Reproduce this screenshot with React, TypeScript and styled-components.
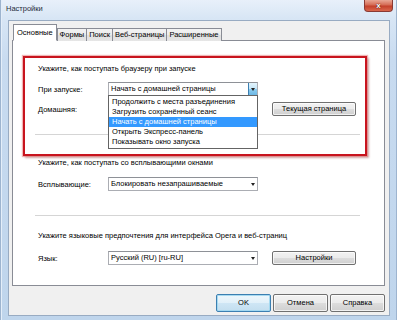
import React from 'react';
import styled, { createGlobalStyle, css } from 'styled-components';

const Global = createGlobalStyle`
  html, body { margin: 0; padding: 0; background: #cfe0f2; }
  body { font-family: "Liberation Sans", Arial, sans-serif; font-size: 7.5px; color: #000; }
  * { box-sizing: border-box; }
`;

const Window = styled.div`
  width: 397px;
  height: 320px;
  display: flex;
  flex-direction: column;
  background: linear-gradient(180deg, #e8f0fa 0px, #d8e6f5 18px, #c8dbf0 60px, #bfd5ec 100%);
  box-shadow: inset 1px 0 0 #9db4cf, inset 2px 0 0 #e4eef9, inset -1px 0 0 #9db4cf;
  overflow: hidden;
`;

const TitleBar = styled.div`
  height: 20px;
  display: flex;
  align-items: flex-start;
  justify-content: space-between;
  padding: 0 4px 0 6px;
`;

const Title = styled.div`
  margin-top: 4px;
  font-size: 7.5px;
  line-height: 10px;
  color: #1e2a3a;
`;

const CloseButton = styled.div`
  width: 29px;
  height: 12px;
  border: 1px solid #8a3a34;
  border-top: none;
  border-radius: 0 0 4px 4px;
  background: linear-gradient(180deg, #e9a795 0%, #d56b55 45%, #c4402b 55%, #d9674d 100%);
  display: flex;
  align-items: center;
  justify-content: center;
  color: #fff;
  font-weight: bold;
  font-size: 8px;
  line-height: 8px;
  text-shadow: 0 0 1px #5a1a12, 0 0 1px #5a1a12;
`;

const Body = styled.div`
  flex: 1;
  margin: 0 7px 4px 8px;
  border: 1px solid #98abc2;
  background: #f0f0f0;
  padding: 3px 4px 3px 3px;
  display: flex;
  flex-direction: column;
`;

const TabRow = styled.div`
  display: flex;
  align-items: flex-end;
  height: 17px;
  margin-bottom: -1px;
  padding-left: 1px;
  position: relative;
  z-index: 1;
`;

const Tab = styled.div<{ $active?: boolean }>`
  height: 13px;
  padding: 0 2px;
  border: 1px solid #898c95;
  border-bottom: none;
  margin-right: -1px;
  line-height: 12px;
  white-space: nowrap;
  background: linear-gradient(180deg, #f3f3f3 0%, #ebebeb 50%, #dedede 50%, #e6e6e6 100%);
  ${(p) =>
    p.$active &&
    css`
      height: 17px;
      padding: 0 3px;
      line-height: 16px;
      background: #fff;
      border-bottom: 1px solid #fff;
      margin-right: 0;
    `}
`;

const Panel = styled.div`
  flex: 1;
  background: #fff;
  border: 1px solid #898c95;
  display: flex;
  flex-direction: column;
`;

const Highlight = styled.div`
  margin: 15px 17px 0 10px;
  border: 2px solid #c8141e;
  box-shadow: 0 0 1px 1px rgba(230, 120, 120, 0.55), 2px 2px 2px rgba(120, 20, 20, 0.35);
  padding: 6px 0 19px 13px;
`;

const Group = styled.div<{ $top: number }>`
  padding-left: 25px;
  margin-top: ${(p) => p.$top}px;
`;

const Heading = styled.div`
  line-height: 10px;
  height: 10px;
  white-space: nowrap;
`;

const Row = styled.div<{ $top: number }>`
  display: flex;
  align-items: center;
  height: 14px;
  margin-top: ${(p) => p.$top}px;
`;

const Label = styled.div`
  width: 70px;
  flex: none;
  white-space: nowrap;
`;

const SelectBox = styled.div`
  position: relative;
  width: 150px;
  height: 14px;
  flex: none;
  border: 1px solid #abadb3;
  border-top-color: #8e9197;
  background: #fff;
  display: flex;
  align-items: center;
  padding-left: 2px;
`;

const SelectText = styled.div`
  flex: 1;
  white-space: nowrap;
  overflow: hidden;
  line-height: 12px;
`;

const Caret = styled.div`
  width: 0;
  height: 0;
  border-left: 2.5px solid transparent;
  border-right: 2.5px solid transparent;
  border-top: 3px solid #222;
  margin-right: 2px;
`;

const ArrowButton = styled.div`
  width: 9px;
  height: 12px;
  border-left: 1px solid #3c7fb1;
  background: linear-gradient(180deg, #e3f4fc 0%, #c4e6f8 50%, #8ecdf0 50%, #6cb7e4 100%);
  display: flex;
  align-items: center;
  justify-content: center;
  padding-left: 2px;
`;

const DropList = styled.div`
  position: absolute;
  top: 100%;
  left: -1px;
  width: 150px;
  border: 1px solid #646464;
  background: #fff;
  padding: 1px 0;
  z-index: 5;
`;

const DropItem = styled.div<{ $selected?: boolean }>`
  height: 10px;
  line-height: 10px;
  padding-left: 3px;
  white-space: nowrap;
  ${(p) =>
    p.$selected &&
    css`
      background: #3399ff;
      color: #fff;
    `}
`;

const WinButton = styled.div<{ $width: number; $default?: boolean }>`
  width: ${(p) => p.$width}px;
  height: 14px;
  flex: none;
  border: 1px solid #707070;
  border-radius: 2px;
  background: linear-gradient(180deg, #f2f2f2 0%, #ebebeb 50%, #dddddd 50%, #cfcfcf 100%);
  box-shadow: inset 0 0 0 1px rgba(255, 255, 255, 0.7);
  display: flex;
  align-items: center;
  justify-content: center;
  white-space: nowrap;
  line-height: 12px;
  ${(p) =>
    p.$default &&
    css`
      border-color: #3c7fb1;
      background: linear-gradient(180deg, #eef7fc 0%, #e1f0f9 50%, #cfe6f5 50%, #c3deef 100%);
      box-shadow: inset 0 0 0 1px rgba(160, 215, 240, 0.9);
    `}
`;

const Gap = styled.div<{ $w: number }>`
  width: ${(p) => p.$w}px;
  flex: none;
`;

const Separator = styled.div<{ $top: number }>`
  height: 1px;
  background: #d5d5d5;
  margin-top: ${(p) => p.$top}px;
`;

const InnerSeparator = styled(Separator)`
  margin-left: -3px;
  margin-right: 5px;
`;

const GroupSeparator = styled(Separator)`
  margin-left: -3px;
  margin-right: 24px;
`;

const ButtonRow = styled.div`
  display: flex;
  justify-content: flex-end;
  gap: 2px;
  margin-top: 8px;
  height: 18px;
`;

const DialogButton = styled(WinButton)`
  height: 18px;
  line-height: 16px;
`;

const startupOptions = [
  'Продолжить с места разъединения',
  'Загрузить сохранённый сеанс',
  'Начать с домашней страницы',
  'Открыть Экспресс-панель',
  'Показывать окно запуска',
];

export default function App() {
  return (
    <>
      <Global />
      <Window>
        <TitleBar>
          <Title>Настройки</Title>
          <CloseButton>x</CloseButton>
        </TitleBar>
        <Body>
          <TabRow>
            <Tab $active>Основные</Tab>
            <Tab>Формы</Tab>
            <Tab>Поиск</Tab>
            <Tab>Веб-страницы</Tab>
            <Tab>Расширенные</Tab>
          </TabRow>
          <Panel>
            <Highlight>
              <Heading>Укажите, как поступать браузеру при запуске</Heading>
              <Row $top={8}>
                <Label>При запуске:</Label>
                <SelectBox>
                  <SelectText>Начать с домашней страницы</SelectText>
                  <ArrowButton>
                    <Caret />
                  </ArrowButton>
                  <DropList>
                    {startupOptions.map((o, i) => (
                      <DropItem key={o} $selected={i === 2}>
                        {o}
                      </DropItem>
                    ))}
                  </DropList>
                </SelectBox>
              </Row>
              <Row $top={6}>
                <Label>Домашняя:</Label>
                <Gap $w={164} />
                <WinButton $width={84}>Текущая страница</WinButton>
              </Row>
              <InnerSeparator $top={18} />
            </Highlight>
            <Group $top={2}>
              <Heading>Укажите, как поступать со всплывающими окнами</Heading>
              <Row $top={9}>
                <Label>Всплывающие:</Label>
                <SelectBox>
                  <SelectText>Блокировать незапрашиваемые</SelectText>
                  <Caret />
                </SelectBox>
              </Row>
              <GroupSeparator $top={24} />
            </Group>
            <Group $top={15}>
              <Heading>Укажите языковые предпочтения для интерфейса Opera и веб-страниц</Heading>
              <Row $top={10}>
                <Label>Язык:</Label>
                <SelectBox>
                  <SelectText>Русский (RU) [ru-RU]</SelectText>
                  <Caret />
                </SelectBox>
                <Gap $w={14} />
                <WinButton $width={84}>Настройки</WinButton>
              </Row>
            </Group>
          </Panel>
          <ButtonRow>
            <DialogButton $width={55} $default>
              OK
            </DialogButton>
            <DialogButton $width={55}>Отмена</DialogButton>
            <DialogButton $width={55}>Справка</DialogButton>
          </ButtonRow>
        </Body>
      </Window>
    </>
  );
}
